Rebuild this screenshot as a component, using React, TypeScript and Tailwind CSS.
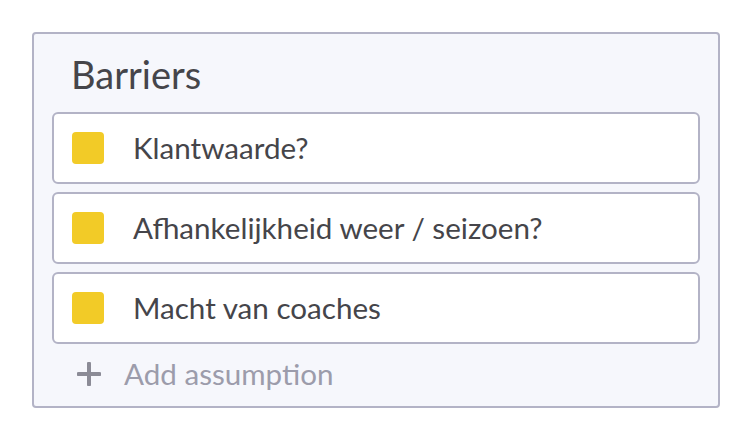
import React from "react";

const items = ["Klantwaarde?", "Afhankelijkheid weer / seizoen?", "Macht van coaches"];

export default function App() {
  return (
    <div className="w-[752px] h-[440px] bg-white pt-[32px] pl-[32px]" style={{ fontFamily: "Lato, 'Open Sans', sans-serif" }}>
      <div className="w-[688px] h-[376px] border-2 border-[#b3b3c6] rounded-[4px] bg-[#f6f7fc] px-[18px] flex flex-col">
        <div className="h-[78px] flex items-end pb-[19px] pl-[19px]">
          <span className="text-[38px] leading-none text-[#45454a]">Barriers</span>
        </div>
        <div className="flex flex-col gap-2">
          {items.map((t) => (
            <div key={t} className="h-[72px] border-2 border-[#b3b3c6] rounded-[6px] bg-white flex items-center pl-[18px]">
              <div className="w-[32px] h-[32px] rounded-[4px] bg-[#f2cb27]" />
              <span className="ml-[29px] text-[29.6px] leading-none text-[#45454a]">{t}</span>
            </div>
          ))}
        </div>
        <div className="flex-1 flex items-center pl-[25px] pb-[2px]">
          <svg width="24" height="24" viewBox="0 0 24 24" className="shrink-0">
            <path d="M12 1.5v21M1.5 12h21" stroke="#8b8b96" strokeWidth="4" strokeLinecap="round" />
          </svg>
          <span className="ml-[23px] text-[29.6px] leading-none text-[#9c9cab]">Add assumption</span>
        </div>
      </div>
    </div>
  );
}
